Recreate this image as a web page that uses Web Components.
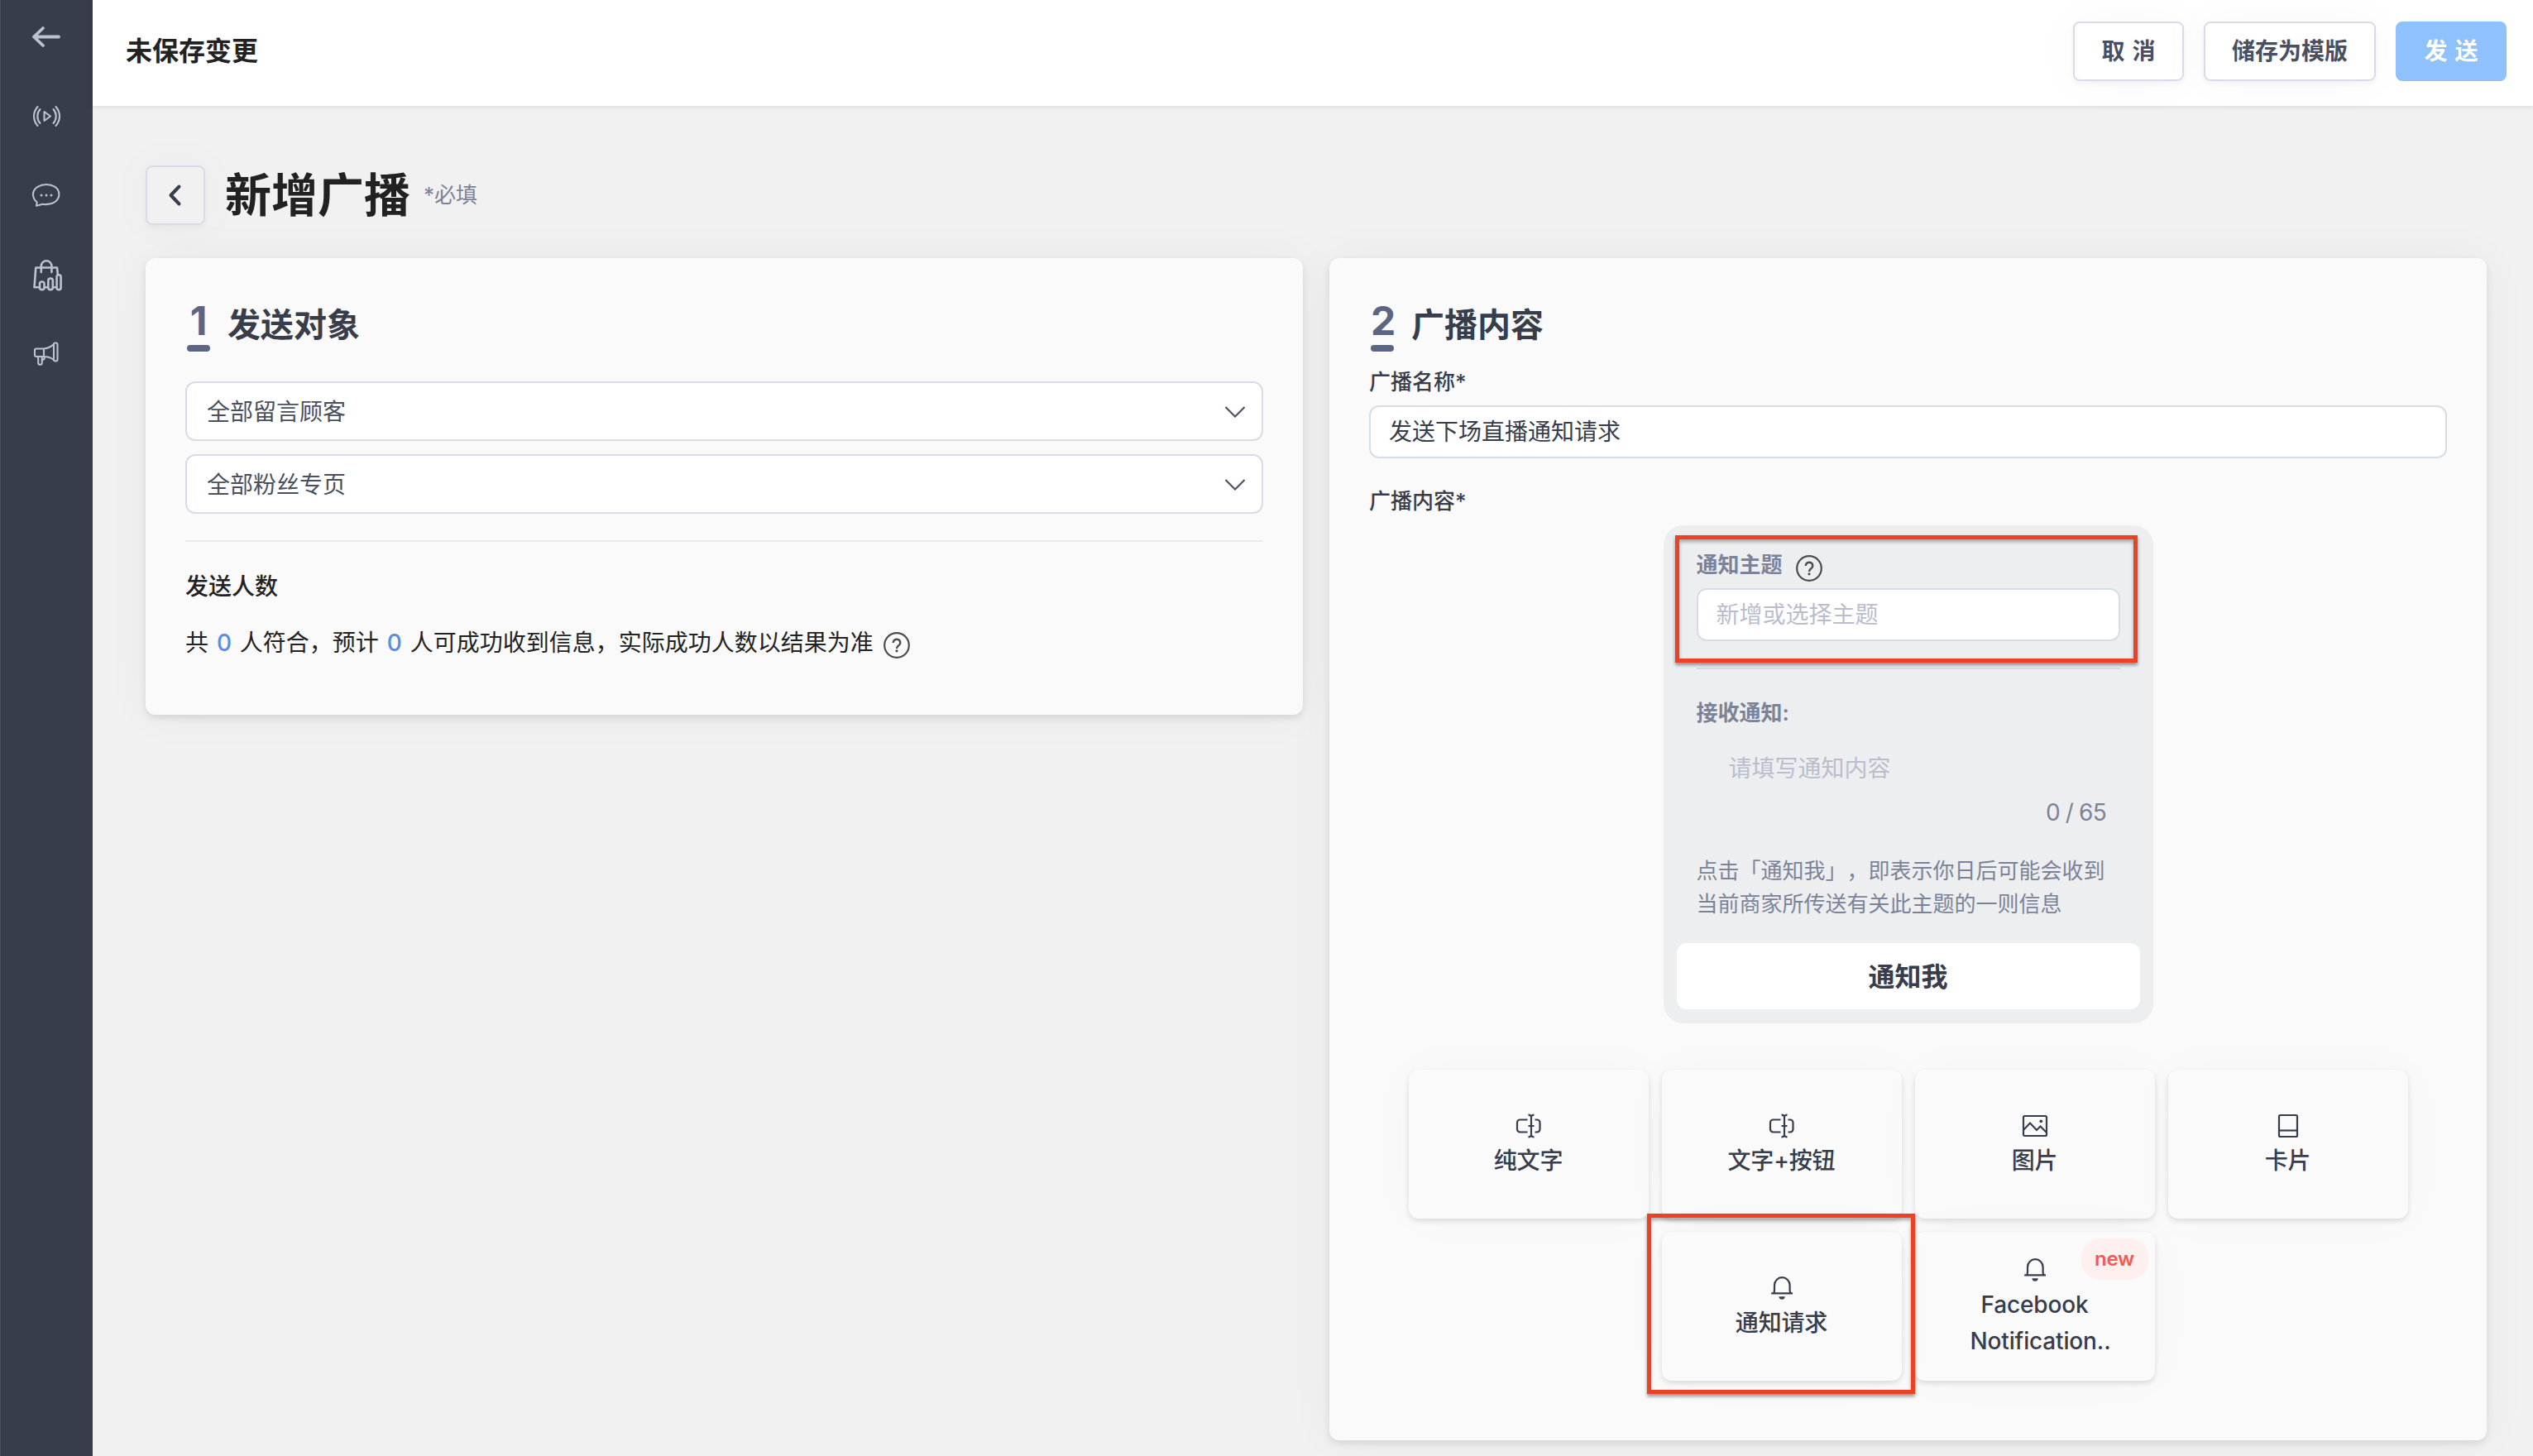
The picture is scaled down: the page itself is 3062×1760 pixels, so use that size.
<!DOCTYPE html>
<html lang="zh-CN">
<head>
<meta charset="UTF-8">
<title>新增广播</title>
<style>
    body {
        margin: 0;
        font-family: Inter, "Noto Sans CJK SC", sans-serif;
        font-size: 28px;
        line-height: 40px;
        text-spacing-trim: space-all;
        color: #222222;
        background: #f1f1f1;
    }
</style>
</head>
<body>
<broadcast-page></broadcast-page>

<script>
const ICONS = {
    text: '<path d="M14.5 8.5H5.5a3.5 3.5 0 0 0-3.5 3.5v8a3.5 3.5 0 0 0 3.5 3.5h9M23.5 8.5h2.5a3.5 3.5 0 0 1 3.5 3.5v8a3.5 3.5 0 0 1-3.5 3.5h-2.5M19 5v22M15.5 16h7M15.5 2.7c2 0 3.5.8 3.5 2.6 0-1.8 1.5-2.6 3.5-2.6M15.5 29.3c2 0 3.5-.8 3.5-2.6 0 1.8 1.5 2.6 3.5 2.6"/>',
    image: '<rect x="2" y="4" width="28" height="24" rx="1.5"/><path d="M2.5 20.5L10 12.500l8 8.500 4.500-4.500 7 7"/><circle cx="23.300" cy="10.300" r="1.900" fill="currentColor" stroke="none"/>',
    card: '<rect x="5" y="3" width="22" height="26" rx="1.500"/><path d="M5 21.500h22"/>',
    bell: '<path d="M3.200 22.300h25.800M6 22.300c.7-1 1-2 1-3.500v-6.300a9.300 9.300 0 0 1 18.600 0v6.300c0 1.500.3 2.500 1 3.500"/><path d="M12.500 26.300h7.200a3.600 3.400 0 0 1-7.200 0z" fill="currentColor" stroke="none"/>'
};

class SideNav extends HTMLElement {
    constructor() {
        super();
        this.attachShadow({ mode: 'open' });
    }

    connectedCallback() {
        this.shadowRoot.innerHTML = `
            <style>
                :host {
                    display: flex;
                    flex-direction: column;
                    align-items: center;
                    gap: 56px;
                    width: 112px;
                    padding-top: 24px;
                    box-sizing: border-box;
                    background: #383d4c;
                    box-shadow: inset 1px 0 0 #4a4f5f;
                    color: #bdc1d0;
                }

                svg {
                    width: 40px;
                    height: 40px;
                    fill: none;
                    stroke: currentColor;
                    stroke-width: 2.1;
                    stroke-linecap: round;
                    stroke-linejoin: round;
                    overflow: visible;
                }

                .back {
                    stroke-width: 3.8;
                }

                .shop {
                    stroke-width: 2.6;
                }
            </style>
            <svg class="back" viewBox="0 0 40 40"><path d="M35 20.500H5M16 10L5 20.500L16 31"/></svg>
            <svg viewBox="0 0 40 40"><path d="M17.500 15v11l7.500-5.500z"/><path d="M12.500 12c-4.300 5-4.300 12 0 17M9.500 9c-6 7-6 16 0 23M28.500 12c4.300 5 4.300 12 0 17M31.500 9c6 7 6 16 0 23"/></svg>
            <svg viewBox="0 0 40 40"><path d="M8.700 28.300C2 23 2.500 14 9.500 9.800c6-3.700 15-3.700 21 0 6.500 4.200 6.500 13.700 0 18.200-4.500 3-10 3.500-15 2.800L8 32.700z"/><g fill="currentColor" stroke="none"><circle cx="14" cy="20" r="1.500"/><circle cx="20" cy="20" r="1.500"/><circle cx="26" cy="20" r="1.500"/></g></svg>
            <svg class="shop" viewBox="0 0 40 40"><path d="M13.800 17V9.500a6.300 6.300 0 0 1 12.600 0V17M10.500 35.300H5.500L7.300 11.500H33l.8 8"/><rect x="12" y="28.500" width="5.500" height="9.800" rx="2.700"/><rect x="22.300" y="24.500" width="5.500" height="13.800" rx="2.700"/><rect x="32.600" y="20.300" width="5" height="18" rx="2.500"/><path d="M18.500 35.300h3M28.500 35.300h3.500"/></svg>
            <svg viewBox="0 0 40 40"><path d="M17 13.500H8a2 2 0 0 0-2 2v5.500a2 2 0 0 0 2 2h9zM17 13.500c5-.5 9-2.500 12-5.500M17 23c5 0 9 1.500 12 4M18 23.500c0 2-1 3.500-3.200 3.500"/><rect x="29" y="6.500" width="4.500" height="22" rx="2"/><path d="M10.200 23v7.500a2.300 2.300 0 0 0 4.600 0V23"/></svg>
        `;
    }
}

class AppButton extends HTMLElement {
    constructor() {
        super();
        this.attachShadow({ mode: 'open' });
    }

    connectedCallback() {
        this.shadowRoot.innerHTML = `
            <style>
                :host {
                    display: flex;
                    align-items: center;
                    justify-content: center;
                    height: 72px;
                    min-width: 72px;
                    padding: 0 32px;
                    box-sizing: border-box;
                    border: 2px solid #d9dbe8;
                    border-radius: 8px;
                    color: #4a4f5f;
                    font-weight: 600;
                    box-shadow: 0 0 60px rgba(0, 0, 0, .03), 0 4px 6px rgba(0, 0, 0, .04);
                }

                :host([spaced]) {
                    width: 134px;
                    padding: 0;
                    word-spacing: 2px;
                }

                :host([primary]) {
                    border-color: #8fc1fd;
                    background: #8fc1fd;
                    color: #ffffff;
                    box-shadow: none;
                }

                :host([square]) {
                    padding: 0;
                    width: 72px;
                    color: #383d4c;
                }
            </style>
            <slot></slot>
        `;
    }
}

class TopBar extends HTMLElement {
    constructor() {
        super();
        this.attachShadow({ mode: 'open' });
    }

    connectedCallback() {
        this.shadowRoot.innerHTML = `
            <style>
                :host {
                    display: flex;
                    align-items: center;
                    justify-content: space-between;
                    height: 128px;
                    padding: 0 32px 4px 40px;
                    box-sizing: border-box;
                    background: #ffffff;
                    box-shadow: 0 1px 6px rgba(0, 0, 0, .1);
                }

                .title {
                    font-size: 32px;
                    font-weight: 600;
                }

                .actions {
                    display: flex;
                    gap: 24px;
                }
            </style>
            <div class="title">未保存变更</div>
            <div class="actions">
                <app-button spaced>取 消</app-button>
                <app-button>储存为模版</app-button>
                <app-button spaced primary>发 送</app-button>
            </div>
        `;
    }
}

class StepCard extends HTMLElement {
    constructor() {
        super();
        this.attachShadow({ mode: 'open' });
    }

    connectedCallback() {
        this.shadowRoot.innerHTML = `
            <style>
                :host {
                    display: block;
                    padding: 48px 48px 0;
                    box-sizing: border-box;
                    border-radius: 12px;
                    background: #fafafa;
                    box-shadow: 0 0 60px rgba(0, 0, 0, .04), 0 4px 10px rgba(0, 0, 0, .1);
                }

                .head {
                    display: flex;
                    gap: 21px;
                    height: 65px;
                    padding-left: 2px;
                }

                .number {
                    width: 28px;
                    text-align: center;
                    font-size: 48px;
                    font-weight: 700;
                    line-height: 55px;
                    color: #5b6584;
                }

                .number::after {
                    content: "";
                    display: block;
                    height: 8px;
                    margin-top: 2px;
                    border-radius: 4px;
                    background: #5b6584;
                }

                .title {
                    font-size: 40px;
                    font-weight: 600;
                    line-height: 66px;
                    color: #383d4c;
                }
            </style>
            <div class="head">
                <div class="number">${this.getAttribute('step')}</div>
                <div class="title">${this.getAttribute('heading')}</div>
            </div>
            <slot></slot>
        `;
    }
}

class SelectBox extends HTMLElement {
    constructor() {
        super();
        this.attachShadow({ mode: 'open' });
    }

    connectedCallback() {
        this.shadowRoot.innerHTML = `
            <style>
                :host {
                    display: flex;
                    align-items: center;
                    justify-content: space-between;
                    height: 72px;
                    padding: 2px 20px 0 24px;
                    box-sizing: border-box;
                    border: 2px solid #d9dbe8;
                    border-radius: 12px;
                    background: #ffffff;
                    color: #4a4f5f;
                }

                svg {
                    width: 26px;
                    height: 16px;
                    fill: none;
                    stroke: #4a4f5f;
                    stroke-width: 2.1;
                }
            </style>
            <slot></slot>
            <svg viewBox="0 0 26 16"><path d="M2.500 2L14 13.500 25.500 2"/></svg>
        `;
    }
}

class TextField extends HTMLElement {
    constructor() {
        super();
        this.attachShadow({ mode: 'open' });
    }

    connectedCallback() {
        this.shadowRoot.innerHTML = `
            <style>
                :host {
                    display: flex;
                    align-items: center;
                    height: 64px;
                    padding: 0 22px;
                    box-sizing: border-box;
                    border: 2px solid #d5dde6;
                    border-radius: 12px;
                    background: #ffffff;
                    color: #383d4c;
                }

                :host([empty]) {
                    color: #b9bdcc;
                }
            </style>
            <slot></slot>
        `;
    }
}

class HelpIcon extends HTMLElement {
    constructor() {
        super();
        this.attachShadow({ mode: 'open' });
    }

    connectedCallback() {
        this.shadowRoot.innerHTML = `
            <style>
                :host {
                    display: block;
                    width: 32px;
                    height: 32px;
                    color: #4c4c4c;
                }

                svg {
                    display: block;
                    fill: none;
                    stroke: currentColor;
                    stroke-width: 2.2;
                }
            </style>
            <svg width="32" height="32" viewBox="0 0 32 32">
                <circle cx="16" cy="16" r="14.800"/>
                <path d="M11.700 13a4.300 4.100 0 1 1 6.600 3.300c-1.500 1-2.300 1.700-2.300 3.700" stroke-width="2.500"/>
                <circle cx="16" cy="22.800" r="1.600" fill="currentColor" stroke="none"/>
            </svg>
        `;
    }
}

class NotifyPreview extends HTMLElement {
    constructor() {
        super();
        this.attachShadow({ mode: 'open' });
    }

    connectedCallback() {
        this.shadowRoot.innerHTML = `
            <style>
                :host {
                    display: block;
                    width: 592px;
                    height: 602px;
                    padding: 0 16px;
                    box-sizing: border-box;
                    border-radius: 24px;
                    background: #edeef0;
                    color: #7b8399;
                    font-size: 26px;
                }

                .body {
                    padding: 0 24px;
                }

                .topic {
                    position: relative;
                    padding: 28px 0 32px;
                    border-bottom: 2px solid #d5dde6;
                }

                .mark {
                    position: absolute;
                    inset: 12px -21px 6px -26px;
                    border: 5px solid #ec4125;
                    box-shadow: 0 3px 4px rgba(0, 0, 0, .4), inset 0 3px 4px rgba(0, 0, 0, .3);
                }

                .label {
                    display: flex;
                    gap: 16px;
                    font-weight: 600;
                }

                help-icon {
                    margin-top: 8px;
                }

                text-field {
                    margin-top: 8px;
                    font-size: 28px;
                }

                .receive {
                    margin-top: 33px;
                }

                .message {
                    margin-top: 27px;
                    padding-left: 39px;
                    font-size: 28px;
                    color: #b9bdcc;
                }

                .count {
                    margin-top: 13px;
                    padding-right: 16px;
                    text-align: right;
                    font-size: 28px;
                    letter-spacing: -.4px;
                    word-spacing: -1px;
                }

                .hint {
                    margin-top: 31px;
                    white-space: nowrap;
                }

                .confirm {
                    height: 80px;
                    margin-top: 27px;
                    border-radius: 12px;
                    background: #ffffff;
                    color: #383d4c;
                    font-size: 32px;
                    font-weight: 600;
                    line-height: 82px;
                    text-align: center;
                }
            </style>
            <div class="body">
                <div class="topic">
                    <div class="label">通知主题<help-icon></help-icon></div>
                    <text-field empty>新增或选择主题</text-field>
                    <div class="mark"></div>
                </div>
                <div class="label receive">接收通知:</div>
                <div class="message">请填写通知内容</div>
                <div class="count">0 / 65</div>
                <div class="hint">点击「通知我」，即表示你日后可能会收到<br>当前商家所传送有关此主题的一则信息</div>
            </div>
            <div class="confirm">通知我</div>
        `;
    }
}

class TypeTile extends HTMLElement {
    constructor() {
        super();
        this.attachShadow({ mode: 'open' });
    }

    connectedCallback() {
        const badge = this.getAttribute('badge');
        this.shadowRoot.innerHTML = `
            <style>
                :host {
                    position: relative;
                    display: flex;
                    flex-direction: column;
                    align-items: center;
                    justify-content: center;
                    gap: 4px;
                    width: 290px;
                    height: 180px;
                    padding-top: 3px;
                    box-sizing: border-box;
                    border-radius: 12px;
                    background: #fafafa;
                    color: #383d4c;
                    font-weight: 500;
                    line-height: 44px;
                    letter-spacing: -.15px;
                    text-align: center;
                    box-shadow: 0 0 60px rgba(0, 0, 0, .025), 0 3px 6px rgba(40, 40, 70, .14);
                }

                svg {
                    width: 32px;
                    height: 32px;
                    fill: none;
                    stroke: currentColor;
                    stroke-width: 2.2;
                }

                .badge {
                    position: absolute;
                    top: 8px;
                    right: 8px;
                    width: 81px;
                    height: 50px;
                    border-radius: 22px;
                    background: #fdf0ef;
                    color: #ef5c57;
                    font-size: 24px;
                    font-weight: 600;
                    line-height: 50px;
                }

                .mark {
                    display: none;
                    position: absolute;
                    inset: -22px -16px -16px -18px;
                    border: 5px solid #ec4125;
                    box-shadow: 0 3px 4px rgba(0, 0, 0, .4), inset 0 3px 4px rgba(0, 0, 0, .3);
                }

                :host([marked]) .mark {
                    display: block;
                }

                :host([marked]) {
                    z-index: 1;
                }
            </style>
            <svg viewBox="0 0 32 32">${ICONS[this.getAttribute('icon')]}</svg>
            <div><slot></slot></div>
            ${badge ? `<div class="badge">${badge}</div>` : ''}
            <div class="mark"></div>
        `;
    }
}

class BroadcastPage extends HTMLElement {
    constructor() {
        super();
        this.attachShadow({ mode: 'open' });
    }

    connectedCallback() {
        this.shadowRoot.innerHTML = `
            <style>
                :host {
                    display: grid;
                    grid-template-columns: 112px 1fr;
                    height: 1760px;
                    overflow: hidden;
                }

                .content {
                    padding: 72px 56px 0 64px;
                }

                .heading {
                    display: flex;
                    align-items: center;
                    height: 72px;
                    margin-bottom: 40px;
                }

                h1 {
                    margin: 0 16px 0 24px;
                    font-size: 56px;
                    font-weight: 600;
                    line-height: 74px;
                }

                .required {
                    font-size: 26px;
                    color: #7b8399;
                }

                .cards {
                    display: grid;
                    grid-template-columns: 1fr 1fr;
                    gap: 32px;
                    align-items: start;
                }

                .audience {
                    height: 552px;
                }

                .message {
                    height: 1429px;
                }

                .selects {
                    display: flex;
                    flex-direction: column;
                    gap: 16px;
                    margin-top: 36px;
                    padding-bottom: 32px;
                    border-bottom: 2px solid #ebebeb;
                }

                .count-title {
                    margin-top: 34px;
                    font-weight: 500;
                }

                .count {
                    display: flex;
                    gap: 12px;
                    margin-top: 28px;
                    word-spacing: 2px;
                }

                .count b {
                    font-weight: 500;
                    color: #5b8be2;
                }

                .count help-icon {
                    margin-top: 7px;
                }

                .label {
                    font-size: 26px;
                    font-weight: 500;
                    color: #383d4c;
                }

                .name-label {
                    margin: 17px 0 8px;
                }

                .body-label {
                    margin: 32px 0 9px;
                }

                notify-preview {
                    margin: 0 auto;
                }

                .types {
                    display: flex;
                    flex-wrap: wrap;
                    justify-content: center;
                    gap: 16px;
                    width: 1208px;
                    margin: 56px auto 0;
                }

                .long {
                    display: block;
                    padding-left: 14px;
                }
            </style>
            <side-nav></side-nav>
            <main>
                <top-bar></top-bar>
                <div class="content">
                    <div class="heading">
                        <app-button square>
                            <svg width="20" height="30" viewBox="0 0 20 30" fill="none" stroke="currentColor" stroke-width="4" stroke-linecap="round" stroke-linejoin="round"><path d="M14.500 4.500L4.500 15l10 10.500"/></svg>
                        </app-button>
                        <h1>新增广播</h1>
                        <span class="required">*必填</span>
                    </div>
                    <div class="cards">
                        <step-card class="audience" step="1" heading="发送对象">
                            <div class="selects">
                                <select-box>全部留言顾客</select-box>
                                <select-box>全部粉丝专页</select-box>
                            </div>
                            <div class="count-title">发送人数</div>
                            <div class="count"><span>共 <b>0</b> 人符合，预计 <b>0</b> 人可成功收到信息，实际成功人数以结果为准</span><help-icon></help-icon></div>
                        </step-card>
                        <step-card class="message" step="2" heading="广播内容">
                            <div class="label name-label">广播名称*</div>
                            <text-field>发送下场直播通知请求</text-field>
                            <div class="label body-label">广播内容*</div>
                            <notify-preview></notify-preview>
                            <div class="types">
                                <type-tile icon="text">纯文字</type-tile>
                                <type-tile icon="text">文字+按钮</type-tile>
                                <type-tile icon="image">图片</type-tile>
                                <type-tile icon="card">卡片</type-tile>
                                <type-tile icon="bell" marked>通知请求</type-tile>
                                <type-tile icon="bell" badge="new">Facebook<span class="long">Notification..</span></type-tile>
                            </div>
                        </step-card>
                    </div>
                </div>
            </main>
        `;
    }
}

customElements.define('side-nav', SideNav);
customElements.define('app-button', AppButton);
customElements.define('top-bar', TopBar);
customElements.define('step-card', StepCard);
customElements.define('select-box', SelectBox);
customElements.define('text-field', TextField);
customElements.define('help-icon', HelpIcon);
customElements.define('notify-preview', NotifyPreview);
customElements.define('type-tile', TypeTile);
customElements.define('broadcast-page', BroadcastPage);
</script>
</body>
</html>
